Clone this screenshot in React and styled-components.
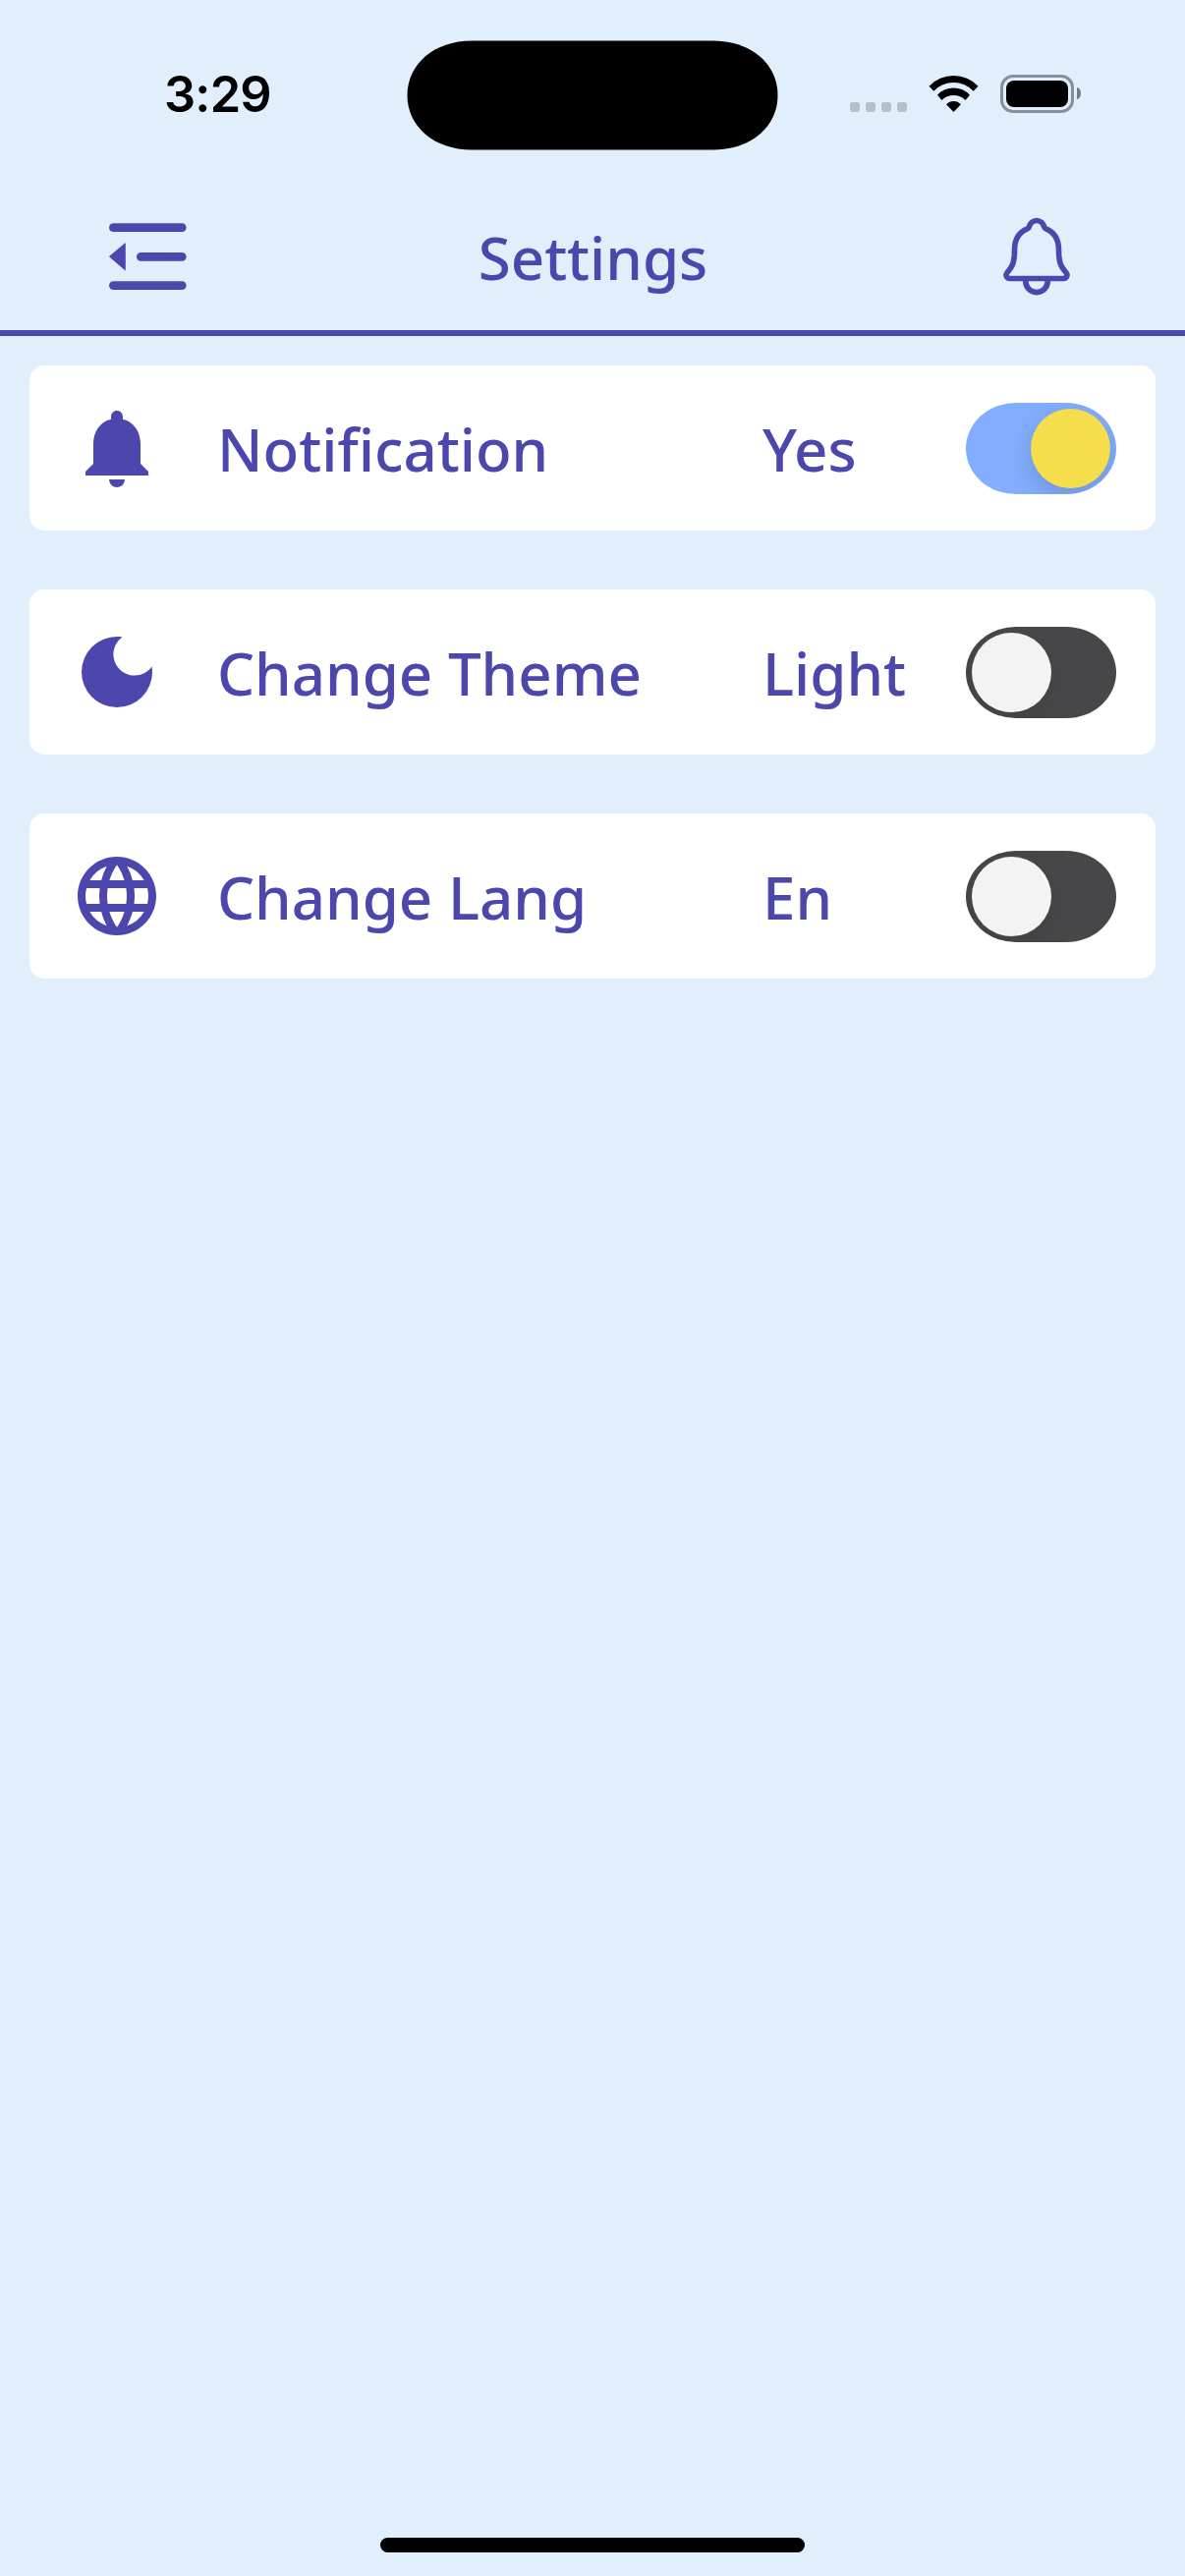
import React, { useState } from "react";
import styled, { createGlobalStyle } from "styled-components";
import { MdNotifications, MdDarkMode, MdLanguage } from "react-icons/md";
import { IoNotificationsOutline } from "react-icons/io5";

const color = {
  page: "#e1effd",
  primary: "#4c47ac",
  card: "#ffffff",
  trackOn: "#81aefe",
  trackOff: "#474749",
  thumbOn: "#f5dd4b",
  thumbOff: "#f3f3f3",
};

const GlobalStyle = createGlobalStyle`
  body {
    margin: 0;
    background: ${color.page};
  }
`;

const Screen = styled.div`
  display: flex;
  flex-direction: column;
  box-sizing: border-box;
  width: 1206px;
  height: 2622px;
  background: ${color.page};
  color: ${color.primary};
  font-family: "Noto Sans", sans-serif;
`;

const StatusBar = styled.div`
  display: grid;
  grid-template-columns: 414px 378px 414px;
  box-sizing: border-box;
  height: 186px;
  padding-top: 41px;
  align-items: start;
`;

const Clock = styled.div`
  margin: 25px 0 0 167px;
  font: 560 50.5px/60px Inter, sans-serif;
  letter-spacing: -0.8px;
  color: #000;
`;

const Island = styled.svg`
  display: block;
  width: 378px;
  height: 112px;
`;

const Indicators = styled.div`
  display: flex;
  align-items: flex-start;
  padding: 35px 0 0 73px;
`;

const SignalDots = styled.div`
  display: flex;
  gap: 6px;
  margin: 28px 22px 0 0;
`;

const Dot = styled.span`
  width: 10px;
  height: 10px;
  border-radius: 3px;
  background: #b4bfca;
`;

const WifiIcon = styled.svg`
  width: 51px;
  height: 37px;
  margin: 1px 22px 0 0;
`;

const Battery = styled.div`
  box-sizing: border-box;
  width: 75px;
  height: 39px;
  padding: 3px;
  border: 3px solid #87909a;
  border-radius: 13px;
`;

const BatteryLevel = styled.div`
  height: 27px;
  border-radius: 8px;
  background: #000;
`;

const BatteryTip = styled.div`
  width: 4px;
  height: 12px;
  margin: 13px 0 0 3px;
  border-radius: 0 4px 4px 0 / 0 6px 6px 0;
  background: #747c84;
`;

const Header = styled.header`
  display: grid;
  grid-template-columns: 90px 1fr 90px;
  align-items: center;
  box-sizing: border-box;
  height: 156px;
  padding: 0 106px 0 105px;
  border-bottom: 6px solid ${color.primary};
`;

const Title = styled.h1`
  margin: 0;
  padding: 2px 0 0 2px;
  font-size: 60px;
  font-weight: 500;
  line-height: 82px;
  text-align: center;
`;

const IconButton = styled.button`
  display: block;
  width: 90px;
  height: 90px;
  padding: 0;
  border: 0;
  background: none;
  color: inherit;

  svg {
    display: block;
  }
`;

const List = styled.main`
  display: flex;
  flex: 1;
  flex-direction: column;
  gap: 60px;
  padding: 30px;
`;

const Row = styled.section`
  display: grid;
  grid-template-columns: 96px 609px 1fr auto;
  align-items: center;
  box-sizing: border-box;
  height: 168px;
  padding: 0 40px 0 41px;
  border-radius: 15px;
  background: ${color.card};

  > svg {
    display: block;
  }
`;

const RowText = styled.span`
  padding-top: 2px;
  padding-left: ${(p) => (p.$indent ? 54 : 0)}px;
  font-size: 60px;
  font-weight: 500;
  line-height: 82px;
  white-space: nowrap;
`;

const Track = styled.button`
  display: flex;
  justify-content: ${(p) => (p.$on ? "flex-end" : "flex-start")};
  box-sizing: border-box;
  width: 153px;
  height: 93px;
  margin-top: 1px;
  padding: 6px;
  overflow: hidden;
  border: 0;
  border-radius: 51px / 46.5px;
  background: ${(p) => (p.$on ? color.trackOn : color.trackOff)};
`;

const Thumb = styled.span`
  width: 81px;
  height: 81px;
  border-radius: 50%;
  background: ${(p) => (p.$on ? color.thumbOn : color.thumbOff)};
  box-shadow: 0 9px 24px rgba(0, 0, 0, ${(p) => (p.$on ? 0.15 : 0.08)});
`;

const HomeIndicator = styled.div`
  align-self: center;
  width: 432px;
  height: 15px;
  margin-bottom: 24px;
  border-radius: 8px;
  background: #000;
`;

function MenuFoldIcon() {
  return (
    <svg width="90" height="90" viewBox="0 0 90 90" fill="currentColor">
      <rect x="6" y="11.3" width="78.6" height="8.7" rx="4.35" />
      <rect x="34" y="41" width="50.6" height="8.7" rx="4.35" />
      <rect x="6" y="70.2" width="78.6" height="8.7" rx="4.35" />
      <path d="M6.6 44.6 22 31.5Q22.8 30.9 22.8 31.9V58.5Q22.8 59.5 22 58.9L6.6 45.8Q5.8 45.2 6.6 44.6Z" />
    </svg>
  );
}

const settings = [
  { id: "notification", icon: MdNotifications, label: "Notification", off: "No", on: "Yes", initial: true },
  { id: "theme", icon: MdDarkMode, label: "Change Theme", off: "Light", on: "Dark", initial: false },
  { id: "lang", icon: MdLanguage, label: "Change Lang", off: "En", on: "Ar", initial: false },
];

function SettingRow({ icon: Icon, label, off, on, initial }) {
  const [active, setActive] = useState(initial);
  return (
    <Row>
      <Icon size={96} />
      <RowText $indent>{label}</RowText>
      <RowText>{active ? on : off}</RowText>
      <Track $on={active} onClick={() => setActive(!active)}>
        <Thumb $on={active} />
      </Track>
    </Row>
  );
}

export default function App() {
  return (
    <Screen>
      <GlobalStyle />
      <StatusBar>
        <Clock>3:29</Clock>
        <Island viewBox="0 0 378 112">
          <path d="M66 .5H312C350 .5 377.5 24 377.5 56S350 111.5 312 111.5H66C28 111.5 .5 88 .5 56S28 .5 66 .5Z" />
        </Island>
        <Indicators>
          <SignalDots>
            <Dot />
            <Dot />
            <Dot />
            <Dot />
          </SignalDots>
          <WifiIcon viewBox="0 0 51 37">
            <path d="M.5 10.7A34.6 34.6 0 0 1 50.5 10.7L45.7 15.7A27.8 27.8 0 0 0 5.3 15.7Z" />
            <path d="M9 19.7A22.3 22.3 0 0 1 42 19.7L37.5 25A16.9 16.9 0 0 0 13.5 25Z" />
            <path d="M18 29.3A10 10 0 0 1 33 29.3L25.5 37Z" />
          </WifiIcon>
          <Battery>
            <BatteryLevel />
          </Battery>
          <BatteryTip />
        </Indicators>
      </StatusBar>
      <Header>
        <IconButton>
          <MenuFoldIcon />
        </IconButton>
        <Title>Settings</Title>
        <IconButton>
          <IoNotificationsOutline size={90} />
        </IconButton>
      </Header>
      <List>
        {settings.map((item) => (
          <SettingRow key={item.id} {...item} />
        ))}
      </List>
      <HomeIndicator />
    </Screen>
  );
}
